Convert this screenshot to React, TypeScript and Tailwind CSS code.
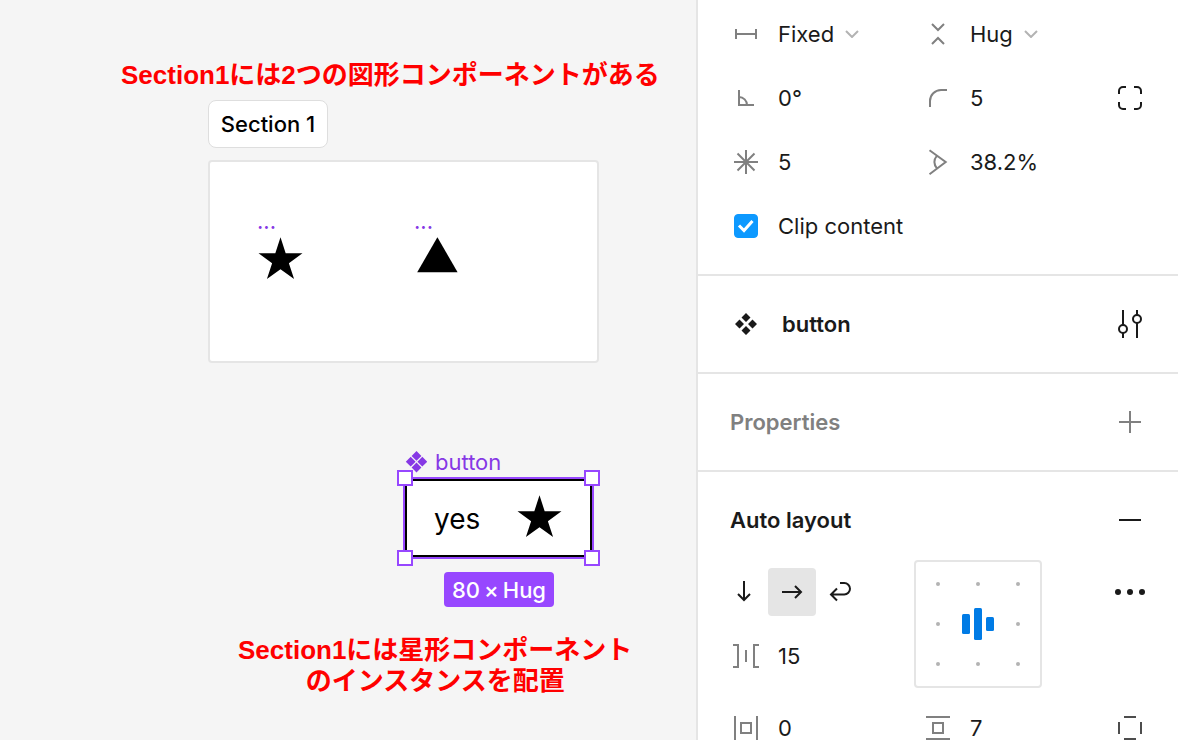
import type { ReactNode } from "react";

function Icon({ children, className = "text-[#808080]" }: { children: ReactNode; className?: string }) {
  return (
    <svg viewBox="0 0 32 32" fill="none" stroke="currentColor" strokeWidth="2" aria-hidden="true" className={`h-8 w-8 shrink-0 ${className}`}>
      {children}
    </svg>
  );
}

function Star() {
  return (
    <svg viewBox="-0.5 -0.3 45 43" aria-hidden="true" className="h-[43px] w-[45px] shrink-0">
      <path d="M22 0L27.18 15.96H43.97L30.39 25.83L35.58 41.79L22 31.92L8.42 41.79L13.61 25.83L0.03 15.96H16.82Z" />
    </svg>
  );
}

function NumberField({ label, value, icon }: { label: string; value: string; icon: ReactNode }) {
  return (
    <label className="flex h-16 items-center gap-4">
      <Icon>{icon}</Icon>
      <input aria-label={label} defaultValue={value} className="w-24 bg-transparent outline-none" />
    </label>
  );
}

function SizingField({ label, value, icon }: { label: string; value: string; icon: ReactNode }) {
  return (
    <label className="flex h-16 items-center gap-4">
      <Icon>{icon}</Icon>
      <span className="flex items-center gap-[11px]">
        <select aria-label={label} defaultValue={value} className="field-sizing-content appearance-none bg-transparent outline-none">
          <option>Fixed</option>
          <option>Hug</option>
        </select>
        <svg viewBox="0 0 14 8" fill="none" stroke="#b3b3b3" strokeWidth="2" aria-hidden="true" className="h-2 w-3.5">
          <path d="M1 1l6 6 6-6" />
        </svg>
      </span>
    </label>
  );
}

function DirectionButton({ label, d, active = false }: { label: string; d: string; active?: boolean }) {
  return (
    <button aria-label={label} aria-pressed={active} className={`h-12 w-12 rounded-sm ${active ? "bg-[#e5e5e5]" : ""}`}>
      <svg viewBox="0 0 48 48" fill="none" stroke="currentColor" strokeWidth="2" aria-hidden="true" className="h-12 w-12">
        <path d={d} />
      </svg>
    </button>
  );
}

const handle = "absolute h-4 w-4 border-2 border-[#9747ff] bg-white";
const note = "absolute text-center font-['Liberation_Sans','Noto_Sans_CJK_JP',sans-serif] text-[26px] leading-[31px] font-bold whitespace-nowrap text-[#ff0000]";
const gridDots = [24, 64, 104];

function Canvas() {
  return (
    <main className="relative min-w-0 flex-1 overflow-hidden bg-[#f5f5f5] text-black">
      <p className={`${note} top-[60px] left-[121px]`}>Section1には2つの図形コンポーネントがある</p>

      <h2 className="absolute top-[100px] left-[208px] flex h-12 w-[120px] items-center justify-center rounded-lg border border-[#dedede] bg-white font-medium whitespace-nowrap">
        Section 1
      </h2>
      <section aria-label="Section 1" className="absolute top-[160px] left-[208px] h-[203px] w-[391px] rounded border-2 border-[#e5e5e5] bg-white">
        <div className="absolute top-[50px] left-12 text-[#8638e5]">
          <p className="-ml-px h-[25px] leading-[18px]">...</p>
          <Star />
        </div>
        <div className="absolute top-[50px] left-[204px] text-[#8638e5]">
          <p className="h-[25px] leading-[18px]">...</p>
          <svg viewBox="0 0 46 36" aria-hidden="true" className="h-9 w-[46px]">
            <path d="M23.4 0.3L43.6 35.2H3.2Z" />
          </svg>
        </div>
      </section>

      <p className="absolute top-[448px] left-[405px] flex h-7 items-center gap-2 text-[#8638e5]">
        <svg viewBox="0 0 22 22" fill="currentColor" aria-hidden="true" className="h-[22px] w-[22px] shrink-0">
          <path d="M11.5 0l4.9 4.9-4.9 4.9-4.9-4.9zM11.5 11.6l4.9 4.9-4.9 4.9-4.9-4.9zM5.7 5.8l4.9 4.9-4.9 4.9L.8 10.7zM17.3 5.8l4.9 4.9-4.9 4.9-4.9-4.9z" />
        </svg>
        button
      </p>
      <div className="absolute top-[477px] left-[403px] h-[82px] w-[191px] border-2 border-[#9747ff]">
        <button className="flex h-full w-full items-start justify-between rounded-md border-2 border-black bg-white pt-[14px] pr-7 pl-[27px] text-[28px] leading-[48px]">
          <span>yes</span>
          <Star />
        </button>
        <span className={`${handle} -top-[9px] -left-2`} />
        <span className={`${handle} -top-[9px] -right-2`} />
        <span className={`${handle} -bottom-[9px] -left-2`} />
        <span className={`${handle} -right-2 -bottom-[9px]`} />
      </div>
      <p className="absolute top-[572px] left-[444px] flex h-[35px] w-[110px] items-center justify-center gap-1 rounded bg-[#9747ff] font-medium whitespace-nowrap text-white">
        <span>80</span>
        <span>×</span>
        <span>Hug</span>
      </p>
      <p className={`${note} top-[635px] left-[238px]`}>
        Section1には星形コンポーネント
        <br />
        のインスタンスを配置
      </p>
    </main>
  );
}

function Inspector() {
  return (
    <aside className="w-[482px] shrink-0 overflow-hidden border-l-2 border-[#e5e5e5] bg-white text-[#1a1a1a]">
      <section className="grid grid-cols-[192px_192px_32px] border-b-2 border-[#e5e5e5] pt-0.5 pb-4 pl-8">
        <SizingField label="Horizontal sizing" value="Fixed" icon={<path d="M6 11v10M26 11v10M6 16h20" />} />
        <SizingField label="Vertical sizing" value="Hug" icon={<path d="M10 6l6 6 6-6M10 26l6-6 6 6" />} />
        <span />
        <NumberField label="Rotation" value="0°" icon={<path d="M9 8v15h15M9 15a8 8 0 0 1 8 8" />} />
        <NumberField label="Corner radius" value="5" icon={<path d="M8 25v-6A11 11 0 0 1 19 8h6" />} />
        <button aria-label="Independent corners" className="h-16">
          <Icon className="text-[#1a1a1a]">
            <path d="M5 12V9a4 4 0 0 1 4-4h3M20 5h3a4 4 0 0 1 4 4v3M27 20v3a4 4 0 0 1-4 4h-3M12 27H9a4 4 0 0 1-4-4v-3" />
          </Icon>
        </button>
        <NumberField label="Star points" value="5" icon={<path d="M16 4v24M4 16h24M7.5 7.5l17 17M24.5 7.5l-17 17" />} />
        <NumberField label="Star ratio" value="38.2%" icon={<path d="M7.5 4.2L23.7 16L7.5 28.2M15 9.5Q9.8 16 15 22.5" />} />
        <span />
        <label className="col-span-3 flex h-16 items-center gap-4">
          <span className="relative flex h-8 w-8 items-center justify-center">
            <input type="checkbox" defaultChecked className="peer h-6 w-6 appearance-none rounded border border-[#808080] checked:border-[#0d99ff] checked:bg-[#0d99ff]" />
            <svg viewBox="0 0 24 24" fill="none" stroke="white" strokeWidth="3" aria-hidden="true" className="pointer-events-none absolute h-6 w-6 opacity-0 peer-checked:opacity-100">
              <path d="M5 11.5l5 5 8.5-9.5" />
            </svg>
          </span>
          Clip content
        </label>
      </section>

      <section className="flex h-[98px] items-center border-b-2 border-[#e5e5e5] px-8">
        <span className="flex w-8 justify-center">
          <svg viewBox="5 5 22 22" fill="currentColor" aria-hidden="true" className="h-[22px] w-[22px]">
            <path d="M16 5l4.5 4.5L16 14l-4.5-4.5zM16 18l4.5 4.5L16 27l-4.5-4.5zM9.5 11.5L14 16l-4.5 4.5L5 16zM22.5 11.5L27 16l-4.5 4.5L18 16z" />
          </svg>
        </span>
        <h2 className="flex-1 pl-5 font-semibold">button</h2>
        <button aria-label="Component configuration">
          <Icon className="text-[#1a1a1a]">
            <path d="M9 2v15M9 25v5M23 2v5M23 15v15" />
            <circle cx="9" cy="21" r="4" />
            <circle cx="23" cy="11" r="4" />
          </Icon>
        </button>
      </section>

      <section className="flex h-[98px] items-center justify-between border-b-2 border-[#e5e5e5] px-8 text-[#808080]">
        <h2 className="font-semibold">Properties</h2>
        <button aria-label="Add property">
          <Icon>
            <path d="M16 5v22M5 16h22" />
          </Icon>
        </button>
      </section>

      <section>
        <div className="flex h-[88px] items-center justify-between px-8 pt-2">
          <h2 className="font-semibold">Auto layout</h2>
          <button aria-label="Remove auto layout">
            <Icon className="text-[#1a1a1a]">
              <path d="M5 16h22" />
            </Icon>
          </button>
        </div>
        <div className="flex items-start pr-8 pl-[22px]">
          <div className="w-[194px] pt-2">
            <div className="flex">
              <DirectionButton label="Vertical layout" d="M24 13v19M18 26l6 6 6-6" />
              <DirectionButton label="Horizontal layout" active d="M14 24h19M27 18l6 6-6 6" />
              <DirectionButton label="Wrap" d="M24 15h4.25a5.75 5.75 0 0 1 0 11.5H15.5M21 20.5l-6 6 6 6" />
            </div>
            <div className="mt-2 pl-2.5">
              <NumberField label="Gap between items" value="15" icon={<path d="M3 5h5v22H3M29 5h-5v22h5M16 10v12" />} />
            </div>
          </div>
          <button aria-label="Alignment: center" className="h-32 w-32 rounded border-2 border-[#e5e5e5]">
            <svg viewBox="2 2 124 124" aria-hidden="true" className="h-full w-full">
              {gridDots.map((y) =>
                gridDots.map((x) => (x === 64 && y === 64 ? null : <circle key={`${x}-${y}`} cx={x} cy={y} r="2" fill="#b3b3b3" />)),
              )}
              <g fill="#007be5">
                <rect x="48" y="54" width="8" height="20" rx="1.5" />
                <rect x="60" y="48" width="8" height="32" rx="1.5" />
                <rect x="72" y="57" width="8" height="14" rx="1.5" />
              </g>
            </svg>
          </button>
          <button aria-label="Advanced layout settings" className="ml-auto flex h-16 items-center">
            <Icon className="text-[#1a1a1a]">
              <g fill="currentColor" stroke="none">
                <circle cx="4" cy="16" r="3" />
                <circle cx="16" cy="16" r="3" />
                <circle cx="28" cy="16" r="3" />
              </g>
            </Icon>
          </button>
        </div>
        <div className="grid grid-cols-[192px_192px_32px] pt-2 pl-8">
          <NumberField label="Horizontal padding" value="0" icon={<path d="M5 4v24M27 4v24M11 11h10v10H11z" />} />
          <NumberField label="Vertical padding" value="7" icon={<path d="M4 5h24M4 27h24M11 11h10v10H11z" />} />
          <button aria-label="Individual padding" className="h-16">
            <Icon className="text-[#4d4d4d]">
              <path d="M10 5h12M10 27h12M5 10v12M27 10v12" />
            </Icon>
          </button>
        </div>
      </section>
    </aside>
  );
}

export default function App() {
  return (
    <div className="flex h-screen overflow-hidden font-['Inter',sans-serif] text-[22px] leading-7">
      <Canvas />
      <Inspector />
    </div>
  );
}
